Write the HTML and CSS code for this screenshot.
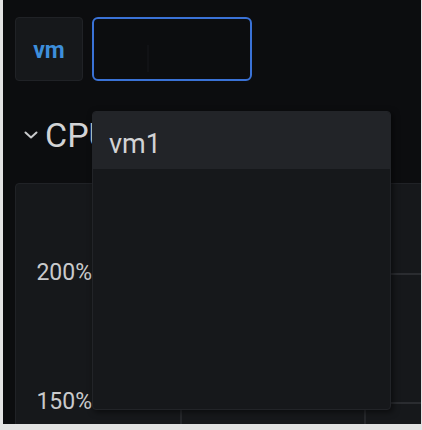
FILE: index.html
```html
<!DOCTYPE html>
<html>
<head>
<meta charset="utf-8">
<link rel="stylesheet" href="styles.css">
</head>
<body>
<div class="app">
  <div class="toolbar">
    <div class="var-label">vm</div>
    <div class="var-input"><span class="caret"></span></div>
  </div>
  <div class="row-title">
    <svg class="chevron" width="14" height="8" viewBox="0 0 14 8"><path d="M1.5 1.5 L7 6.5 L12.5 1.5" fill="none" stroke="#c9cacc" stroke-width="2" stroke-linecap="round" stroke-linejoin="round"/></svg>
    <span class="row-name">CPU</span>
  </div>
  <div class="panel">
    <div class="chart">
      <span class="axis-label l200">200%</span>
      <span class="axis-label l150">150%</span>
      <div class="hline h200"></div>
      <div class="hline h150"></div>
      <div class="vline v1"></div>
      <div class="vline v2"></div>
    </div>
  </div>
  <div class="dropdown">
    <div class="option active">vm1</div>
  </div>
</div>
</body>
</html>
```
FILE: styles.css
```css
html, body {
  margin: 0;
  padding: 0;
}
body {
  background: #e3e3e3;
  font-family: Roboto, "Noto Sans", sans-serif;
  width: 422px;
  height: 430px;
  overflow: hidden;
}
.app {
  position: relative;
  margin: 0 1px 0 3px;
  height: 424px;
  background: #0c0d0f;
  overflow: hidden;
}
.toolbar {
  display: flex;
  gap: 9px;
  padding: 17px 0 0 12px;
}
.var-label {
  box-sizing: border-box;
  width: 68px;
  height: 64px;
  display: flex;
  align-items: center;
  justify-content: center;
  background: #16181b;
  border: 1px solid #202226;
  border-radius: 4px;
  color: #3d8edb;
  font-size: 23px;
  font-weight: 700;
  padding-top: 2px;
}
.var-input {
  box-sizing: border-box;
  width: 160px;
  height: 64px;
  border: 2px solid #3a72d6;
  border-radius: 6px;
  background: #0c0d0f;
  position: relative;
}
.caret {
  position: absolute;
  left: 53px;
  top: 26px;
  width: 2px;
  height: 27px;
  background: #111215;
}
.row-title {
  height: 102px;
  box-sizing: border-box;
  padding: 6px 0 0 21px;
  display: flex;
  align-items: center;
  gap: 7px;
  color: #d2d3d5;
}
.chevron {
  display: block;
}
.row-name {
  font-size: 34px;
  font-weight: 400;
}
.panel {
  margin: 0 -10px 0 12px;
  height: 260px;
  box-sizing: border-box;
  background: #16181b;
  border: 1px solid #202226;
  border-radius: 4px;
}
.chart {
  position: relative;
  height: 100%;
}
.axis-label {
  position: absolute;
  right: calc(100% - 76px);
  font-size: 23px;
  line-height: 24px;
  color: #c9cacc;
}
.l200 { top: 77px; }
.l150 { top: 206px; }
.hline {
  position: absolute;
  left: 81px;
  right: 0;
  height: 2px;
  background: #2a2c30;
}
.h200 { top: 89px; }
.h150 { top: 218px; }
.vline {
  position: absolute;
  top: 20px;
  bottom: 0;
  width: 2px;
  background: #25272b;
}
.v1 { left: 164px; }
.v2 { left: 348px; }
.dropdown {
  position: absolute;
  left: 89px;
  top: 111px;
  width: 299px;
  height: 299px;
  box-sizing: border-box;
  background: #16181b;
  border: 1px solid #222428;
  border-radius: 4px;
  box-shadow: 2px 2px 6px rgba(0, 0, 0, 0.55);
  overflow: hidden;
}
.option {
  height: 57px;
  box-sizing: border-box;
  display: flex;
  align-items: center;
  padding: 6px 0 0 16px;
  font-size: 27px;
  color: #d2d3d5;
}
.option.active {
  background: #222428;
}
```
